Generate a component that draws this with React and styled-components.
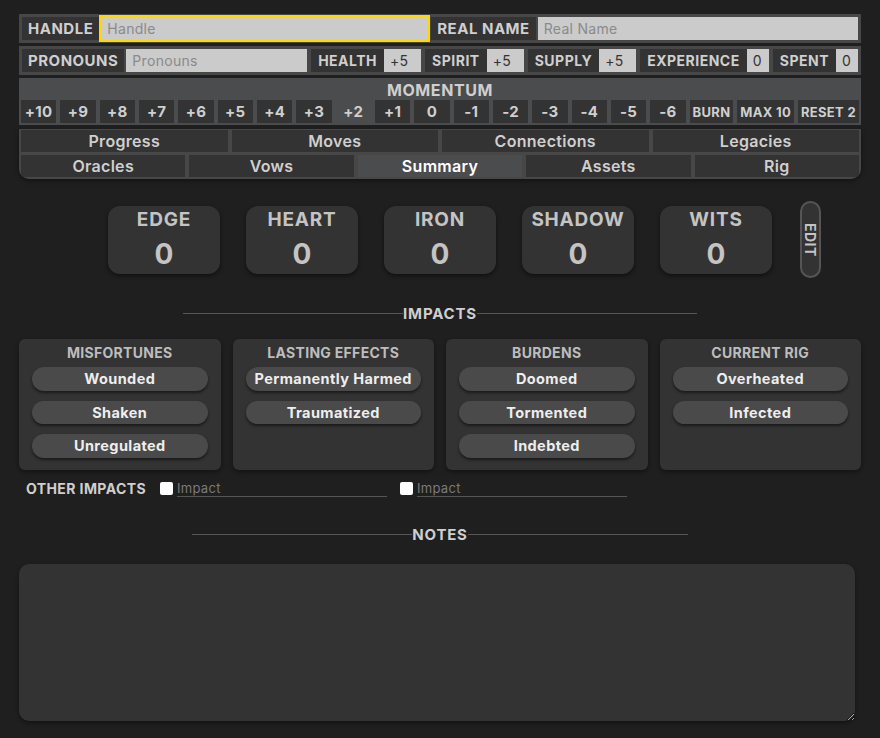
import React from 'react'
import styled, { createGlobalStyle } from 'styled-components'

const Global = createGlobalStyle`
  html, body {
    margin: 0;
    padding: 0;
    background: #1f1f1f;
    font-family: 'Inter', 'Open Sans', sans-serif;
    color: #c8c8c8;
  }
  * { box-sizing: border-box; }
`

const Sheet = styled.div`
  width: 842px;
  margin-left: 19px;
  padding-top: 14px;
  padding-bottom: 16px;
`

const Bar = styled.div`
  display: flex;
  align-items: stretch;
  gap: 3px;
  background: #474747;
  padding: 3px;
  height: 29px;
  margin-bottom: 3px;
`

const Group = styled.div`
  display: flex;
  gap: ${p => p.$gap ?? 2}px;
  min-width: 0;
  flex: ${p => p.$grow || 'none'};
  margin-left: ${p => p.$ml || '0'};
`

const Label = styled.div`
  display: flex;
  align-items: center;
  background: #333;
  color: #cfcfcf;
  font-weight: 700;
  font-size: ${p => p.$size || '15px'};
  letter-spacing: 0.5px;
  padding: 0 ${p => p.$pad || '6px'};
  white-space: nowrap;
`

const Field = styled.input`
  flex: ${p => p.$grow || 'none'};
  width: ${p => (p.$w ? p.$w + 'px' : '0')};
  min-width: 0;
  background: #cbcbcb;
  border: none;
  font-family: inherit;
  font-size: 14px;
  letter-spacing: 0.3px;
  color: #333;
  padding: 0 6px;
  outline: ${p => (p.$focus ? '2px solid #ffd800' : 'none')};
  &::placeholder { color: #8a8a8a; }
`

const Momentum = styled.div`
  background: #4b4c4e;
  padding: 2px;
  margin-bottom: 4px;
`

const MomTitle = styled.div`
  text-align: center;
  font-weight: 700;
  font-size: 16px;
  letter-spacing: 0.6px;
  color: #cfcfcf;
  height: 20px;
  line-height: 20px;
`

const MomRow = styled.div`
  display: flex;
  gap: 4px;
`

const MomBtn = styled.div`
  flex: ${p => (p.$wide ? 'none' : '1')};
  height: 23px;
  display: flex;
  align-items: center;
  justify-content: center;
  padding: ${p => (p.$wide ? '0 3px' : '0')};
  background: ${p => (p.$active ? 'transparent' : '#333')};
  color: #cfcfcf;
  font-weight: 700;
  font-size: ${p => (p.$wide ? '13px' : '15px')};
  letter-spacing: 0.3px;
  white-space: nowrap;
`

const Tabs = styled.div`
  background: #474747;
  padding: 1px 2px 2px;
  border-radius: 0 0 10px 10px;
  display: flex;
  flex-direction: column;
  gap: 3px;
  overflow: hidden;
  box-shadow: 0 2px 4px rgba(0, 0, 0, 0.4);
`

const TabRow = styled.div`
  display: grid;
  grid-template-columns: repeat(${p => p.$n}, 1fr);
  gap: 4px;
`

const Tab = styled.div`
  height: 22px;
  display: flex;
  align-items: center;
  justify-content: center;
  background: ${p => (p.$active ? '#4b4c4e' : '#333')};
  color: ${p => (p.$active ? '#fff' : '#cfcfcf')};
  font-weight: 600;
  font-size: 16px;
  letter-spacing: 0.3px;
`

const StatsRow = styled.div`
  display: grid;
  grid-template-columns: 1fr auto 1fr;
  align-items: center;
  margin-top: 22px;
`

const Stats = styled.div`
  grid-column: 2;
  display: flex;
  gap: 26px;
`

const Stat = styled.div`
  width: 112px;
  height: 68px;
  background: #333;
  border-radius: 12px;
  box-shadow: 0 2px 4px rgba(0, 0, 0, 0.5);
  display: flex;
  flex-direction: column;
  align-items: center;
  padding-top: 3px;
`

const StatName = styled.div`
  font-weight: 700;
  font-size: 19px;
  letter-spacing: 0.8px;
  color: #c4c4c4;
  line-height: 22px;
`

const StatValue = styled.div`
  font-weight: 700;
  font-size: 28px;
  color: #c4c4c4;
  line-height: 36px;
  margin-top: 5px;
`

const EditBtn = styled.div`
  justify-self: start;
  margin-left: 28px;
  width: 21px;
  height: 77px;
  border: 2px solid #555;
  border-radius: 11px;
  background: #333;
  writing-mode: vertical-rl;
  display: flex;
  align-items: center;
  justify-content: center;
  font-weight: 700;
  font-size: 14px;
  letter-spacing: 0.5px;
  color: #c4c4c4;
`

const Heading = styled.div`
  display: flex;
  align-items: center;
  justify-content: center;
  margin: ${p => p.$m};
  font-weight: 700;
  font-size: 15px;
  letter-spacing: 0.8px;
  color: #cfcfcf;
  &::before, &::after {
    content: '';
    width: 220px;
    height: 1px;
    background: #575757;
  }
`

const ImpactGrid = styled.div`
  display: grid;
  grid-template-columns: repeat(4, 1fr);
  gap: 12px;
`

const ImpactBox = styled.div`
  height: 131px;
  background: #333;
  border-radius: 6px;
  box-shadow: 0 2px 4px rgba(0, 0, 0, 0.4);
  padding: 4px 13px 0;
  display: flex;
  flex-direction: column;
  gap: 10px;
`

const ImpactTitle = styled.div`
  text-align: center;
  font-weight: 700;
  font-size: 14px;
  letter-spacing: 0.3px;
  color: #bdbdbd;
  line-height: 20px;
  margin-bottom: -6px;
`

const Pill = styled.div`
  height: 23.5px;
  border-radius: 12px;
  background: #4a4a4a;
  box-shadow: 0 2px 3px rgba(0, 0, 0, 0.5);
  display: flex;
  align-items: center;
  justify-content: center;
  font-weight: 700;
  font-size: 14.5px;
  letter-spacing: 0.4px;
  color: #eee;
  white-space: nowrap;
`

const OtherRow = styled.div`
  display: flex;
  align-items: center;
  margin-top: 9px;
  padding-left: 7px;
  height: 18px;
`

const OtherLabel = styled.div`
  font-weight: 700;
  font-size: 14px;
  letter-spacing: 0.4px;
  color: #cfcfcf;
  margin-right: 14px;
`

const Check = styled.span`
  width: 13px;
  height: 13px;
  background: #fff;
  border-radius: 2px;
  margin-right: 4px;
  margin-left: ${p => p.$ml || '0'};
`

const Underline = styled.input`
  width: 210px;
  background: transparent;
  border: none;
  border-bottom: 1px solid #555;
  font-family: inherit;
  font-size: 13px;
  letter-spacing: 0.3px;
  color: #ccc;
  padding: 0;
  height: 18px;
  outline: none;
  &::placeholder { color: #7a7a7a; }
`

const Notes = styled.textarea`
  display: block;
  width: 836px;
  height: 157px;
  background: #333;
  border: none;
  border-radius: 10px;
  box-shadow: 0 2px 4px rgba(0, 0, 0, 0.4);
  color: #ccc;
  font-family: inherit;
  outline: none;
`

const momentum = ['+10', '+9', '+8', '+7', '+6', '+5', '+4', '+3', '+2', '+1', '0', '-1', '-2', '-3', '-4', '-5', '-6']

const meters = [
  { name: 'HEALTH', value: '+5', w: 37 },
  { name: 'SPIRIT', value: '+5', w: 37 },
  { name: 'SUPPLY', value: '+5', w: 37 },
  { name: 'EXPERIENCE', value: '0', w: 22 },
  { name: 'SPENT', value: '0', w: 22 },
]

const impacts = [
  { title: 'MISFORTUNES', items: ['Wounded', 'Shaken', 'Unregulated'] },
  { title: 'LASTING EFFECTS', items: ['Permanently Harmed', 'Traumatized'] },
  { title: 'BURDENS', items: ['Doomed', 'Tormented', 'Indebted'] },
  { title: 'CURRENT RIG', items: ['Overheated', 'Infected'] },
]

const App = () => {
  return (
    <Sheet>
      <Global />
      <Bar>
        <Group>
          <Label>HANDLE</Label>
          <Field $w={327} $focus placeholder="Handle" />
        </Group>
        <Group $grow={1}>
          <Label>REAL NAME</Label>
          <Field $grow={1} placeholder="Real Name" />
        </Group>
      </Bar>
      <Bar>
        <Group $grow={1} $gap={2}>
          <Label>PRONOUNS</Label>
          <Field $grow={1} placeholder="Pronouns" />
        </Group>
        {meters.map(m => (
          <Group key={m.name} $gap={0} $ml="1px">
            <Label $size="14px" $pad="7px">{m.name}</Label>
            <Field $w={m.w} defaultValue={m.value} />
          </Group>
        ))}
      </Bar>
      <Momentum>
        <MomTitle>MOMENTUM</MomTitle>
        <MomRow>
          {momentum.map(m => (
            <MomBtn key={m} $active={m === '+2'}>{m}</MomBtn>
          ))}
          <MomBtn $wide>BURN</MomBtn>
          <MomBtn $wide>MAX 10</MomBtn>
          <MomBtn $wide>RESET 2</MomBtn>
        </MomRow>
      </Momentum>
      <Tabs>
        <TabRow $n={4}>
          {['Progress', 'Moves', 'Connections', 'Legacies'].map(t => <Tab key={t}>{t}</Tab>)}
        </TabRow>
        <TabRow $n={5}>
          {['Oracles', 'Vows', 'Summary', 'Assets', 'Rig'].map(t => (
            <Tab key={t} $active={t === 'Summary'}>{t}</Tab>
          ))}
        </TabRow>
      </Tabs>
      <StatsRow>
        <Stats>
          {['EDGE', 'HEART', 'IRON', 'SHADOW', 'WITS'].map(s => (
            <Stat key={s}>
              <StatName>{s}</StatName>
              <StatValue>0</StatValue>
            </Stat>
          ))}
        </Stats>
        <EditBtn>EDIT</EditBtn>
      </StatsRow>
      <Heading $m="26px 0 16px">IMPACTS</Heading>
      <ImpactGrid>
        {impacts.map(b => (
          <ImpactBox key={b.title}>
            <ImpactTitle>{b.title}</ImpactTitle>
            {b.items.map(i => <Pill key={i}>{i}</Pill>)}
          </ImpactBox>
        ))}
      </ImpactGrid>
      <OtherRow>
        <OtherLabel>OTHER IMPACTS</OtherLabel>
        <Check />
        <Underline placeholder="Impact" />
        <Check $ml="13px" />
        <Underline placeholder="Impact" />
      </OtherRow>
      <Heading $m="28px 0 20px">NOTES</Heading>
      <Notes />
    </Sheet>
  )
}

export default App
